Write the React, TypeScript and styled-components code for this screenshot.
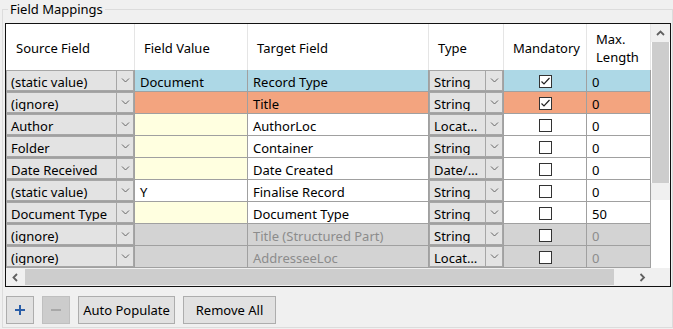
import React from 'react';
import styled, { createGlobalStyle } from 'styled-components';

const GlobalStyle = createGlobalStyle`
  html, body {
    margin: 0;
    padding: 0;
    background: #f0f0f0;
  }
  body {
    font-family: 'Noto Sans', 'Segoe UI', sans-serif;
    font-size: 13px;
    color: #000;
  }
`;

const COLS = '129px 113px 181px 75px 83px 64px';

type Tone = 'blue' | 'salmon' | 'plain' | 'off';

const ROW_BG: Record<Tone, string> = {
  blue: '#add8e6',
  salmon: '#f3a47f',
  plain: '#ffffff',
  off: '#d3d3d3',
};

const Page = styled.div`
  width: 673px;
  height: 329px;
  padding-left: 2px;
  box-sizing: border-box;
  overflow: hidden;
`;

const Group = styled.fieldset`
  margin: 0;
  width: 671px;
  height: 328px;
  box-sizing: border-box;
  border: 1px solid #dcdcdc;
  padding: 5px 0 0 2px;
  min-width: 0;
`;

const Legend = styled.legend`
  margin-left: 3px;
  padding: 0 2px;
  line-height: 18px;
  font-size: 13px;
`;

const Grid = styled.div`
  width: 666px;
  height: 264px;
  box-sizing: border-box;
  border: 1px solid #111;
  display: grid;
  grid-template-columns: 645px 19px;
  grid-template-rows: 244px 18px;
  background: #fff;
`;

const Body = styled.div`
  display: flex;
  flex-direction: column;
  overflow: hidden;
`;

const HeaderRow = styled.div`
  display: grid;
  grid-template-columns: ${COLS};
  height: 46px;
  flex-shrink: 0;
`;

const HeaderCell = styled.div<{ $first?: boolean }>`
  box-sizing: border-box;
  display: flex;
  align-items: center;
  padding-left: ${p => (p.$first ? 10 : 9)}px;
  border-right: 1px solid #e5e5e5;
  line-height: 18px;
  white-space: pre-line;
  padding-top: 2px;
`;

const Row = styled.div`
  display: grid;
  grid-template-columns: ${COLS};
  height: 22px;
  flex-shrink: 0;
`;

const Cell = styled.div<{ $bg: string; $muted?: boolean }>`
  box-sizing: border-box;
  height: 22px;
  border-right: 1px solid #a0a0a0;
  border-bottom: 1px solid #a0a0a0;
  background: ${p => p.$bg};
  color: ${p => (p.$muted ? '#8c8c8c' : '#000')};
  padding: 3px 0 0 5px;
  line-height: 18px;
  white-space: nowrap;
  overflow: hidden;
`;

const CheckCell = styled.div<{ $bg: string }>`
  box-sizing: border-box;
  height: 22px;
  border-right: 1px solid #a0a0a0;
  border-bottom: 1px solid #a0a0a0;
  background: ${p => p.$bg};
  display: flex;
  justify-content: center;
  align-items: flex-start;
  padding: 5px 0 0 0;
`;

const Box = styled.div`
  width: 13px;
  height: 13px;
  box-sizing: border-box;
  border: 1px solid #333;
  background: #fff;
  display: flex;
  align-items: center;
  justify-content: center;
`;

const Combo = styled.div`
  box-sizing: border-box;
  height: 22px;
  display: flex;
  background: #e3e3e3;
  border-right: 1px solid #a0a0a0;
  border-bottom: 1px solid #a0a0a0;
  box-shadow: inset 1px 1px 0 #a6a6a6, inset -1px -1px 0 #a6a6a6;
`;

const ComboText = styled.div`
  flex: 1;
  min-width: 0;
  height: 19px;
  box-sizing: border-box;
  padding: 3px 0 0 5px;
  line-height: 18px;
  white-space: nowrap;
  overflow: hidden;
`;

const DropButton = styled.div`
  width: 17px;
  flex-shrink: 0;
  border-left: 1px solid #a6a6a6;
  display: flex;
  align-items: center;
  justify-content: center;
  padding-bottom: 1px;
`;

const VScroll = styled.div`
  display: flex;
  flex-direction: column;
  background: #fff;
`;

const ArrowBox = styled.div<{ $w?: number; $h?: number }>`
  width: ${p => (p.$w ? `${p.$w}px` : 'auto')};
  height: ${p => (p.$h ? `${p.$h}px` : 'auto')};
  flex-shrink: 0;
  background: #f0f0f0;
  display: flex;
  align-items: center;
  justify-content: center;
`;

const VThumb = styled.div`
  height: 141px;
  margin: 0 1px;
  background: #cdcdcd;
  flex-shrink: 0;
`;

const VTrack = styled.div`
  height: 17px;
  background: #f0f0f0;
  flex-shrink: 0;
`;

const HScroll = styled.div`
  display: flex;
  background: #f0f0f0;
`;

const HThumb = styled.div`
  width: 589px;
  margin: 1px 0 1px 1px;
  background: #cdcdcd;
`;

const Spacer = styled.div`
  flex: 1;
`;

const Corner = styled.div`
  background: #f0f0f0;
`;

const Footer = styled.div`
  display: flex;
  gap: 8px;
  margin: 9px 0 0 1px;
`;

const Button = styled.button<{ $w: number; $disabled?: boolean }>`
  width: ${p => p.$w}px;
  height: 28px;
  box-sizing: border-box;
  border: 1px solid ${p => (p.$disabled ? '#bfbfbf' : '#adadad')};
  background: ${p => (p.$disabled ? '#cccccc' : '#e1e1e1')};
  font-family: 'Noto Sans', 'Segoe UI', sans-serif;
  font-size: 13px;
  color: #000;
  padding: 0;
  display: flex;
  align-items: center;
  justify-content: center;
`;

const Chevron = ({ dir = 'down', color = '#666', bold = false }: { dir?: 'down' | 'up' | 'left' | 'right'; color?: string; bold?: boolean }) => {
  const pts: Record<string, string> = {
    down: '1,1.5 4.5,5 8,1.5',
    up: '1,5 4.5,1.5 8,5',
    left: '5,1 1.5,4.5 5,8',
    right: '1.5,1 5,4.5 1.5,8',
  };
  const wide = dir === 'down' || dir === 'up';
  return (
    <svg width={wide ? 9 : 7} height={wide ? 7 : 9} viewBox={wide ? '0 0 9 7' : '0 0 7 9'}>
      <polyline points={pts[dir]} fill="none" stroke={color} strokeWidth={bold ? 1.8 : 1} />
    </svg>
  );
};

const Check = () => (
  <svg width="11" height="11" viewBox="0 0 11 11">
    <polyline points="1.5,5.5 4,8 9.5,2" fill="none" stroke="#222" strokeWidth="1.2" />
  </svg>
);

type Mapping = {
  source: string;
  value: string;
  target: string;
  type: string;
  mandatory: boolean;
  max: string;
  tone: Tone;
  valueBg?: string;
};

const YELLOW = '#ffffe0';

const rows: Mapping[] = [
  { source: '(static value)', value: 'Document', target: 'Record Type', type: 'String', mandatory: true, max: '0', tone: 'blue' },
  { source: '(ignore)', value: '', target: 'Title', type: 'String', mandatory: true, max: '0', tone: 'salmon' },
  { source: 'Author', value: '', target: 'AuthorLoc', type: 'Locat…', mandatory: false, max: '0', tone: 'plain', valueBg: YELLOW },
  { source: 'Folder', value: '', target: 'Container', type: 'String', mandatory: false, max: '0', tone: 'plain', valueBg: YELLOW },
  { source: 'Date Received', value: '', target: 'Date Created', type: 'Date/…', mandatory: false, max: '0', tone: 'plain', valueBg: YELLOW },
  { source: '(static value)', value: 'Y', target: 'Finalise Record', type: 'String', mandatory: false, max: '0', tone: 'plain' },
  { source: 'Document Type', value: '', target: 'Document Type', type: 'String', mandatory: false, max: '50', tone: 'plain', valueBg: YELLOW },
  { source: '(ignore)', value: '', target: 'Title (Structured Part)', type: 'String', mandatory: false, max: '0', tone: 'off' },
  { source: '(ignore)', value: '', target: 'AddresseeLoc', type: 'Locat…', mandatory: false, max: '0', tone: 'off' },
];

const headers = ['Source Field', 'Field Value', 'Target Field', 'Type', 'Mandatory', 'Max.\nLength'];

function ComboCell({ text }: { text: string }) {
  return (
    <Combo>
      <ComboText>{text}</ComboText>
      <DropButton>
        <Chevron />
      </DropButton>
    </Combo>
  );
}

export default function App() {
  return (
    <Page>
      <GlobalStyle />
      <Group>
        <Legend>Field Mappings</Legend>
        <Grid>
          <Body>
            <HeaderRow>
              {headers.map((h, i) => (
                <HeaderCell key={h} $first={i === 0}>{h}</HeaderCell>
              ))}
            </HeaderRow>
            {rows.map((r, i) => {
              const bg = ROW_BG[r.tone];
              const muted = r.tone === 'off';
              return (
                <Row key={i}>
                  <ComboCell text={r.source} />
                  <Cell $bg={r.valueBg || bg}>{r.value}</Cell>
                  <Cell $bg={bg} $muted={muted}>{r.target}</Cell>
                  <ComboCell text={r.type} />
                  <CheckCell $bg={bg}>
                    <Box>{r.mandatory && <Check />}</Box>
                  </CheckCell>
                  <Cell $bg={bg} $muted={muted}>{r.max}</Cell>
                </Row>
              );
            })}
          </Body>
          <VScroll>
            <ArrowBox $h={18}>
              <Chevron dir="up" bold color="#606060" />
            </ArrowBox>
            <VThumb />
            <VTrack />
          </VScroll>
          <HScroll>
            <ArrowBox $w={18}>
              <Chevron dir="left" bold color="#606060" />
            </ArrowBox>
            <HThumb />
            <Spacer />
            <ArrowBox $w={18}>
              <Chevron dir="right" bold color="#606060" />
            </ArrowBox>
          </HScroll>
          <Corner />
        </Grid>
        <Footer>
          <Button $w={28}>
            <svg width="12" height="12" viewBox="0 0 12 12">
              <path d="M6 1v10M1 6h10" stroke="#2a5ea8" strokeWidth="2" />
            </svg>
          </Button>
          <Button $w={28} $disabled>
            <svg width="12" height="12" viewBox="0 0 12 12">
              <path d="M1 6h10" stroke="#a8a8a8" strokeWidth="2" />
            </svg>
          </Button>
          <Button $w={97}>Auto Populate</Button>
          <Button $w={93}>Remove All</Button>
        </Footer>
      </Group>
    </Page>
  );
}
